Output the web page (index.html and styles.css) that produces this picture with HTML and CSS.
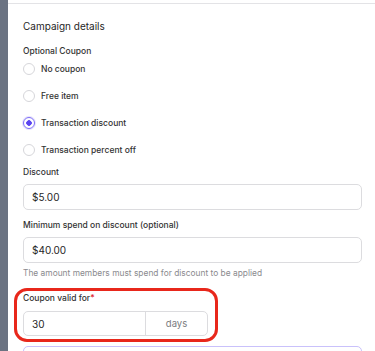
FILE: index.html
```html
<!DOCTYPE html>
<html lang="en">
<head>
  <meta charset="UTF-8">
  <meta name="viewport" content="width=device-width, initial-scale=1.0">
  <title>Campaign details</title>
  <link rel="stylesheet" href="styles.css">
</head>
<body>
  <div class="layout">
    <aside class="sidebar"></aside>
    <main class="panel">
      <h2 class="section-title">Campaign details</h2>

      <div class="field coupon-field">
        <div class="label">Optional Coupon</div>
        <ul class="radio-list">
          <li class="radio"><span class="dot"></span>No coupon</li>
          <li class="radio"><span class="dot"></span>Free item</li>
          <li class="radio checked"><span class="dot"></span>Transaction discount</li>
          <li class="radio"><span class="dot"></span>Transaction percent off</li>
        </ul>
      </div>

      <div class="field discount-field">
        <div class="label">Discount</div>
        <div class="input">$5.00</div>
      </div>

      <div class="field">
        <div class="label">Minimum spend on discount (optional)</div>
        <div class="input">$40.00</div>
        <div class="hint">The amount members must spend for discount to be applied</div>
      </div>

      <div class="field highlight">
        <div class="label">Coupon valid for<span class="req">*</span></div>
        <div class="input-group">
          <div class="input-value">30</div>
          <div class="input-addon">days</div>
        </div>
        <div class="ring"></div>
      </div>

      <div class="next-box"></div>
    </main>
  </div>
</body>
</html>
```

FILE: styles.css
```css
* {
  padding: 0;
  margin: 0;
  box-sizing: border-box;
  font-family: "Inter", "Liberation Sans", sans-serif;
}

body {
  background-color: #ffffff;
  color: #2b2b2b;
}

.layout {
  display: flex;
  height: 351px;
  overflow: hidden;
}

.sidebar {
  width: 8px;
  background-color: #6b7382;
}

.panel {
  flex: 1;
  margin-top: 3px;
  border-top: 1px solid #e3e3e6;
  padding: 0 13px 0 15px;
}

.section-title {
  font-size: 10px;
  line-height: 12px;
  font-weight: 400;
  margin-top: 16px;
  color: #262626;
}

.field {
  margin-top: 9px;
}

.coupon-field {
  margin-top: 13px;
}

.discount-field {
  margin-top: 3px;
}

.label {
  font-size: 8.5px;
  font-weight: 500;
  color: #333333;
  line-height: 12px;
}

.radio-list {
  list-style: none;
  margin-top: -2px;
}

.radio {
  display: flex;
  align-items: center;
  height: 27px;
  font-size: 8.5px;
  font-weight: 500;
  color: #333333;
}

.dot {
  width: 12px;
  height: 12px;
  border-radius: 50%;
  border: 1px solid #d6d6da;
  margin-right: 6px;
  background: #fff;
}

.radio.checked .dot {
  border-color: #7b6cf6;
  box-shadow: 0 0 0 1px #e6e1fd;
  background: radial-gradient(circle, #5b45f0 0 2.5px, #fff 3px);
}

.input {
  height: 26px;
  margin-top: 6px;
  border: 1px solid #dcdcdf;
  border-radius: 5px;
  padding: 0 8px;
  display: flex;
  align-items: center;
  font-size: 10px;
  color: #262626;
}

.hint {
  font-size: 8.4px;
  line-height: 10px;
  color: #8a8a8e;
  margin-top: 5px;
}

.highlight {
  position: relative;
  margin-top: 14px;
}

.req {
  color: #e0262a;
}

.input-group {
  display: flex;
  width: 185px;
  height: 25px;
  margin-top: 7px;
  border: 1px solid #dcdcdf;
  border-radius: 5px;
}

.input-value {
  flex: 1;
  display: flex;
  align-items: center;
  padding: 0 8px;
  font-size: 10px;
  color: #262626;
  border-right: 1px solid #dcdcdf;
}

.input-addon {
  width: 61px;
  display: flex;
  align-items: center;
  justify-content: center;
  font-size: 9.5px;
  color: #7a7a7e;
}

.ring {
  position: absolute;
  left: -9px;
  top: -4px;
  width: 204px;
  height: 54px;
  border: 3px solid #e8271b;
  border-radius: 13px;
}

.next-box {
  height: 30px;
  margin-top: 10px;
  border: 1px solid #c9c1fb;
  border-radius: 5px;
}
```
